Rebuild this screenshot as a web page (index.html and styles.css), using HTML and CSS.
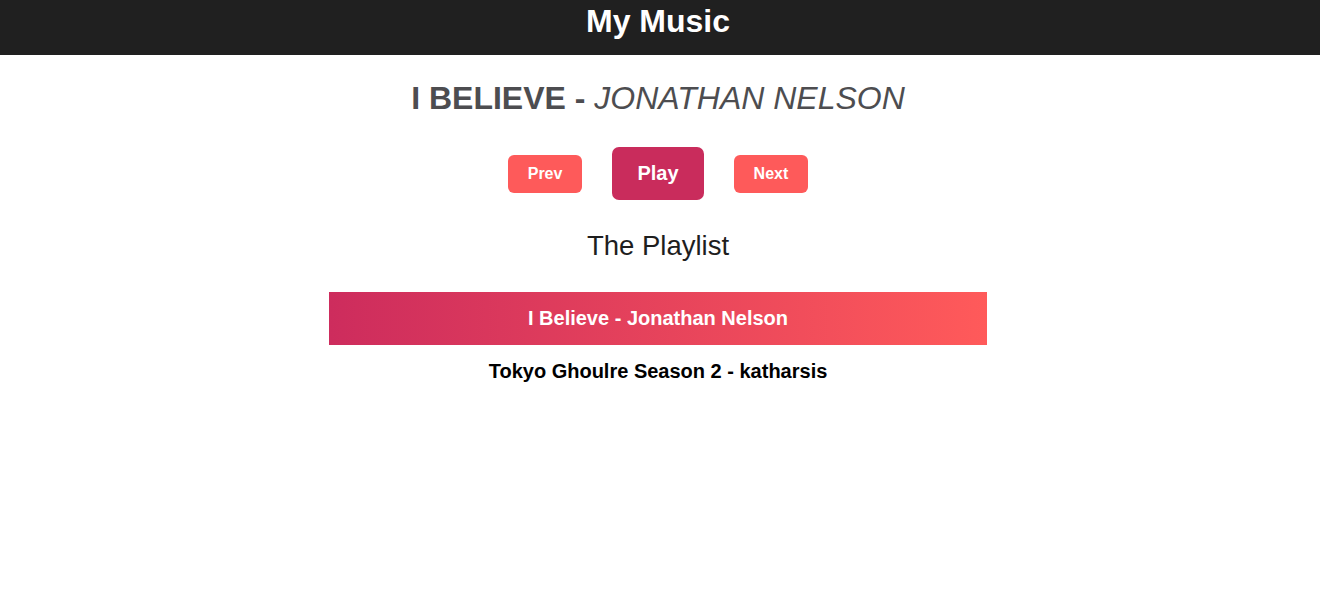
FILE: index.html
```html
<!DOCTYPE html>
<html lang="en">
<head>
<meta charset="utf-8">
<title>My Music</title>
<link rel="stylesheet" href="styles.css">
</head>
<body>
<header class="topbar">
  <h1 class="brand">My Music</h1>
</header>
<main class="player">
  <h2 class="now-playing"><span class="song">I BELIEVE</span> - <em class="artist">JONATHAN NELSON</em></h2>
  <div class="controls">
    <button class="btn btn-small">Prev</button>
    <button class="btn btn-play">Play</button>
    <button class="btn btn-small">Next</button>
  </div>
  <h3 class="playlist-title">The Playlist</h3>
  <ul class="playlist">
    <li class="track active">I Believe - Jonathan Nelson</li>
    <li class="track">Tokyo Ghoulre Season 2 - katharsis</li>
  </ul>
</main>
</body>
</html>
```
FILE: styles.css
```css
* { box-sizing: border-box; }
body {
  margin: 0;
  font-family: "Liberation Sans", Arial, sans-serif;
  background: #fff;
}
.topbar {
  background: #202020;
  height: 55px;
  padding: 3px 4px 0 0;
  text-align: center;
}
.brand {
  margin: 0;
  color: #fff;
  font-size: 32px;
  font-weight: bold;
  line-height: normal;
}
.player {
  display: flex;
  flex-direction: column;
  align-items: center;
  padding-right: 4px;
}
.now-playing {
  margin: 25px 0 0;
  font-size: 32px;
  line-height: normal;
  color: #4d4d50;
  font-weight: bold;
}
.artist {
  font-weight: normal;
  font-style: italic;
}
.controls {
  display: flex;
  align-items: center;
  gap: 30px;
  margin-top: 30px;
}
.btn {
  border: none;
  color: #fff;
  font-family: "Liberation Sans", Arial, sans-serif;
  font-weight: bold;
  line-height: normal;
  border-radius: 6px;
  cursor: pointer;
}
.btn-small {
  background: #fe5a5a;
  font-size: 16px;
  padding: 10px 20px;
}
.btn-play {
  background: #c92c5c;
  font-size: 20px;
  padding: 15px 25px;
  border-radius: 7px;
}
.playlist-title {
  margin: 30px 0 0;
  font-size: 27.5px;
  font-weight: normal;
  line-height: normal;
  color: #1e1e1e;
}
.playlist {
  list-style: none;
  margin: 30px 0 0;
  padding: 0;
  width: 658px;
}
.track {
  text-align: center;
  font-size: 20px;
  font-weight: bold;
  line-height: normal;
  padding: 15px 0;
  color: #000;
}
.track.active {
  color: #fff;
  background: linear-gradient(to right, #cd2c5d, #ff5a5a);
}
```
